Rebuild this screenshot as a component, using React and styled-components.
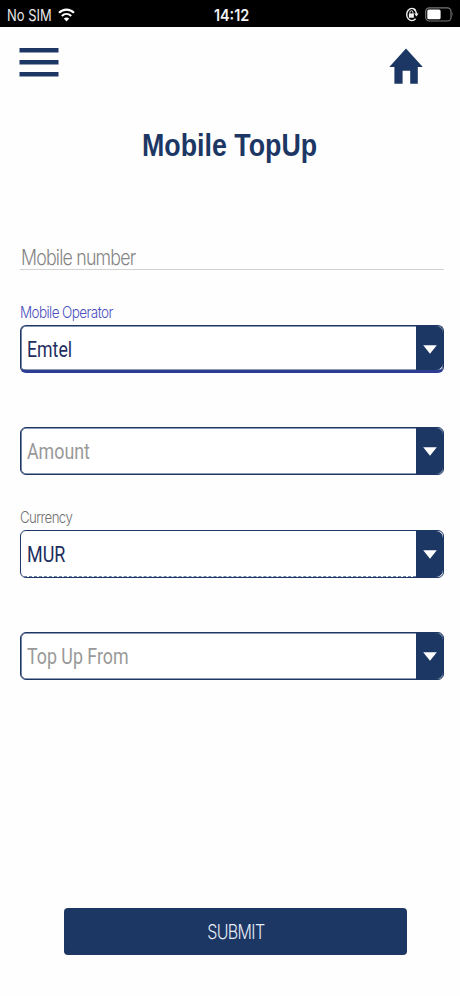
import React from 'react';
import styled, { createGlobalStyle } from 'styled-components';

const navy = '#1d3765';
const indigo = '#4a4fc0';

const GlobalStyle = createGlobalStyle`
  * { box-sizing: border-box; }
  body { margin: 0; background: #fff; }
`;

const Screen = styled.div`
  display: flex;
  flex-direction: column;
  width: 460px;
  height: 996px;
  background: #fefefe;
  overflow: hidden;
`;

const StatusBar = styled.header`
  display: grid;
  grid-template-columns: 204px auto 1fr;
  align-items: center;
  height: 27px;
  padding: 1px 6px 0 7px;
  background: #000;
`;

const StatusGroup = styled.div`
  display: flex;
  align-items: center;
  justify-content: ${(p) => (p.$end ? 'flex-end' : 'flex-start')};
  gap: 6px;
`;

const Condensed = styled.span`
  display: block;
  white-space: nowrap;
  transform: scaleX(${(p) => p.$scale});
  transform-origin: ${(p) => p.$origin || 'left'} center;
`;

const Carrier = styled(Condensed)`
  width: 45px;
  padding-top: 2px;
  font: 400 15.6px/25px Inter, sans-serif;
  color: #e8e8e8;
`;

const Clock = styled(Condensed)`
  padding-left: 1px;
  font: 600 16px/24px Inter, sans-serif;
  color: #f2f2f2;
`;

const TopNav = styled.nav`
  display: flex;
  justify-content: space-between;
  align-items: flex-start;
  height: 93px;
  padding: 20px 36px 0 19px;
`;

const IconButton = styled.button`
  display: flex;
  padding: 0;
  border: 0;
  background: none;
`;

const Title = styled.h1`
  display: flex;
  justify-content: center;
  margin: 0;
  height: 50px;
  font: 700 32px/50px "Liberation Sans", sans-serif;
  color: ${navy};
`;

const Form = styled.form`
  display: flex;
  flex-direction: column;
  flex: 1;
  padding: 70px 16px 41px 20px;
`;

const NumberField = styled.div`
  height: 30px;
  padding-left: 1px;
  border-bottom: 1px solid #d2d2d2;
`;

const NumberHint = styled(Condensed)`
  font: 300 21.6px/35px Inter, sans-serif;
  letter-spacing: -0.045em;
  color: #858585;
`;

const SelectList = styled.div`
  display: flex;
  flex-direction: column;
  gap: 28.5px;
  padding-top: 28.5px;
`;

const Field = styled.div`
  display: flex;
  flex-direction: column;
`;

const FieldLabel = styled(Condensed)`
  height: 26px;
  font: 300 16.1px/26px Inter, sans-serif;
  letter-spacing: -0.045em;
  color: ${(p) => (p.$active ? indigo : '#707070')};
`;

const SelectBox = styled.div`
  display: flex;
  align-items: stretch;
  height: 48px;
  border: 1px solid ${navy};
  border-bottom: ${(p) => (p.$active ? '3px solid #2d3d94' : `1px solid ${navy}`)};
  border-radius: 6px;
  box-shadow: ${(p) => (p.$dotted ? 'none' : `inset 0 0 0 0.6px ${navy}`)};
  background: #fff;
`;

const SelectValue = styled.div`
  flex: 1;
  margin-left: 3px;
  padding-left: 3px;
  border-bottom: ${(p) => (p.$dotted ? '1px dashed #6f80a6' : '0')};
`;

const SelectText = styled(Condensed)`
  width: 200px;
  font: 400 22px/47px Roboto, sans-serif;
  color: ${(p) => (p.$filled ? '#1d2e60' : '#999')};
`;

const ArrowCell = styled.div`
  display: flex;
  align-items: center;
  justify-content: center;
  width: 27px;
  padding-top: ${(p) => (p.$active ? '3px' : '1px')};
  border-radius: 0 7px 7px 0;
  background: ${navy};
`;

const SubmitButton = styled.button`
  display: flex;
  justify-content: center;
  align-items: center;
  width: 343px;
  height: 47px;
  margin: auto 0 0 44px;
  padding: 1px 0 0;
  border: 0;
  border-radius: 4px;
  background: ${navy};
  color: #e6ecf6;
  font: 300 19.5px/24px Inter, sans-serif;
  letter-spacing: -0.04em;
`;

const WifiIcon = () => (
  <svg width="17" height="14" viewBox="0 0 17 14" fill="none" stroke="#fff" strokeWidth="2.1">
    <path d="M1 4.8C5.2.5 11.8.5 16 4.8" />
    <path d="M3.8 8C6.6 5.3 10.4 5.3 13.2 8" />
    <path d="M8.5 13.5 5.8 10.5Q8.5 8.3 11.2 10.5Z" fill="#fff" stroke="none" />
  </svg>
);

const RotationLockIcon = () => (
  <svg width="14" height="15" viewBox="0 0 14 15" fill="none" stroke="#eee">
    <path d="M10.6 3.2A5.2 6.1 0 1 0 10.6 11.8" strokeWidth="1.4" />
    <path d="M8.6 1.9Q11.4 3.8 11.4 7" strokeWidth="1.3" />
    <path d="M9.2 6.6h4.4L11.4 9.6Z" fill="#eee" stroke="none" />
    <rect x="3.9" y="6.6" width="5" height="4.2" rx=".6" fill="#eee" stroke="none" />
    <path d="M4.9 7V5.4a1.5 1.7 0 0 1 3 0V7" strokeWidth="1" />
  </svg>
);

const BatteryIcon = () => (
  <svg width="29" height="15" viewBox="0 0 29 15">
    <rect x=".7" y=".8" width="25.3" height="13.2" rx="3.6" fill="none" stroke="#777" strokeWidth="1.2" />
    <rect x="2.3" y="2.5" width="13.3" height="9.8" rx="1.6" fill="#fff" />
    <path d="M27.2 5.2Q28.8 7.4 27.2 9.6Z" fill="#777" />
  </svg>
);

const MenuIcon = () => (
  <svg width="40" height="30" viewBox="0 0 40 30" fill={navy}>
    <path d="M.5 1H39.5V5.6H.5ZM.5 13H39.5V17.6H.5ZM.5 25H39.5V29.6H.5Z" />
  </svg>
);

const HomeIcon = () => (
  <svg width="36" height="38" viewBox="0 0 36 38" fill={navy}>
    <path d="M18 1.5 34.8 20H29.8V36.8H22.2V23.7H14.6V36.8H6.4V20H1.3Z" />
  </svg>
);

const ArrowIcon = () => (
  <svg width="14" height="9" viewBox="0 0 14 9">
    <path d="M.2.3H13.8L7 8.8Z" fill="#fff" />
  </svg>
);

const fields = [
  { label: 'Mobile Operator', labelScale: 0.842, text: 'Emtel', scale: 0.805, filled: true, active: true },
  { text: 'Amount', scale: 0.81 },
  { label: 'Currency', labelScale: 0.825, text: 'MUR', scale: 0.815, filled: true, dotted: true },
  { text: 'Top Up From', scale: 0.81 },
];

export default function App() {
  return (
    <Screen>
      <GlobalStyle />
      <StatusBar>
        <StatusGroup>
          <Carrier $scale={0.83}>No SIM</Carrier>
          <WifiIcon />
        </StatusGroup>
        <Clock $scale={0.9} $origin="center">14:12</Clock>
        <StatusGroup $end>
          <RotationLockIcon />
          <BatteryIcon />
        </StatusGroup>
      </StatusBar>
      <TopNav>
        <IconButton type="button" aria-label="Menu"><MenuIcon /></IconButton>
        <IconButton type="button" aria-label="Home"><HomeIcon /></IconButton>
      </TopNav>
      <Title><Condensed $scale={0.838} $origin="center">Mobile TopUp</Condensed></Title>
      <Form>
        <NumberField>
          <NumberHint $scale={0.823}>Mobile number</NumberHint>
        </NumberField>
        <SelectList>
          {fields.map((f) => (
            <Field key={f.text}>
              <FieldLabel $scale={f.labelScale || 1} $active={f.active}>{f.label}</FieldLabel>
              <SelectBox $active={f.active} $dotted={f.dotted}>
                <SelectValue $dotted={f.dotted}>
                  <SelectText $scale={f.scale} $filled={f.filled}>{f.text}</SelectText>
                </SelectValue>
                <ArrowCell $active={f.active}><ArrowIcon /></ArrowCell>
              </SelectBox>
            </Field>
          ))}
        </SelectList>
        <SubmitButton type="button">
          <Condensed $scale={0.82} $origin="center">SUBMIT</Condensed>
        </SubmitButton>
      </Form>
    </Screen>
  );
}
